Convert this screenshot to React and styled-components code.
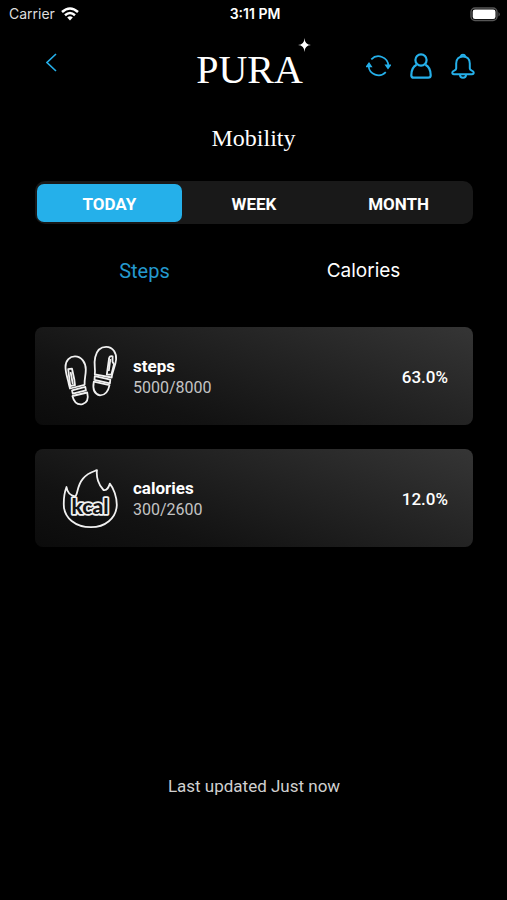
import React, { useState } from "react";
import styled, { createGlobalStyle } from "styled-components";

const BLUE = "#25b0ea";

const GlobalStyle = createGlobalStyle`
  * { box-sizing: border-box; }
  body { margin: 0; background: #000; }
  button { font: inherit; color: inherit; background: none; border: 0; padding: 0; cursor: pointer; }
  svg { display: block; }
`;

const Screen = styled.div`
  min-height: 100vh;
  display: flex;
  flex-direction: column;
  background: #000;
  color: #fff;
  font-family: Roboto, "Liberation Sans", sans-serif;
`;

const StatusBar = styled.div`
  display: grid;
  grid-template-columns: 1fr auto 1fr;
  align-items: center;
  height: 28px;
  padding: 0 6px 0 9px;
  font: 14px/28px Inter, "Liberation Sans", sans-serif;
`;

const Carrier = styled.div`
  display: flex;
  align-items: center;
  gap: 6px;
  color: #ddd;
`;

const Clock = styled.time`
  font-size: 14px;
  font-weight: 600;
`;

const Battery = styled.div`
  justify-self: end;
`;

const Header = styled.header`
  display: grid;
  grid-template-columns: 1fr auto 1fr;
  align-items: center;
  height: 76px;
  padding: 0 32px;
`;

const BackButton = styled.button`
  justify-self: start;
  padding: 4px 14px;
  margin-bottom: 8px;
  color: ${BLUE};
`;

const Logo = styled.div`
  position: relative;
  padding: 8px 8px 0 0;
  font: 40px/48px "Liberation Serif", serif;
`;

const LogoStar = styled.span`
  position: absolute;
  top: 0;
  right: 0;
`;

const Actions = styled.nav`
  display: flex;
  justify-self: end;
  gap: 19px;
  color: ${BLUE};
`;

const Title = styled.h1`
  margin: 17px 0 0;
  text-align: center;
  font: 24px/34px "Liberation Serif", serif;
`;

const Content = styled.main`
  display: flex;
  flex-direction: column;
  flex: 1;
  padding: 26px 34px 0 35px;
`;

const Segments = styled.div`
  display: grid;
  grid-template-columns: repeat(3, 1fr);
  height: 43px;
  padding: 3px 2px 2px;
  border-radius: 10px;
  background: #191919;
`;

const Segment = styled.button`
  && {
    padding-top: 2px;
    border-radius: 7px;
    background: ${(p) => (p.$active ? BLUE : "transparent")};
    font-size: 17px;
    font-weight: 700;
  }
`;

const Tabs = styled.div`
  display: grid;
  grid-template-columns: 1fr 1fr;
  margin-top: 32px;
`;

const Tab = styled.button`
  && {
    font-family: ${(p) => (p.$system ? 'Inter, "Liberation Sans"' : 'Roboto, "Liberation Sans"')}, sans-serif;
    font-size: ${(p) => (p.$system ? "19px" : "20px")};
    line-height: 30px;
    color: ${(p) => (p.$active ? "#2499ce" : "#fff")};
  }
`;

const Cards = styled.div`
  display: flex;
  flex-direction: column;
  gap: 24px;
  margin-top: 41px;
`;

const Card = styled.section`
  display: flex;
  align-items: center;
  height: 98px;
  padding: 0 25px 0 27px;
  border-radius: 8px;
  background: linear-gradient(20deg, #0b0b0b, #121212 25%, #353535);
`;

const CardText = styled.div`
  flex: 1;
  margin-left: 13px;
  padding-top: 2px;
`;

const CardName = styled.h2`
  margin: 0;
  font-size: 17px;
  line-height: 22px;
  font-weight: 700;
`;

const CardValue = styled.p`
  margin: 0;
  font-size: 16px;
  line-height: 22px;
  color: #c4c4c4;
`;

const Percent = styled.div`
  padding-top: 2px;
  font-size: 17px;
  font-weight: 500;
`;

const Updated = styled.footer`
  margin-top: auto;
  padding-bottom: 102px;
  text-align: center;
  font-size: 17px;
  line-height: 24px;
  color: #d0d0d0;
`;

const KcalText = styled.text`
  font: 900 21px Lato, "Liberation Sans", sans-serif;
  stroke-linejoin: round;
`;

const WifiIcon = () => (
  <svg width="18" height="14" viewBox="0 0 18 14" fill="none" stroke="#fff" strokeWidth="2.5">
    <path d="M1 5Q9-2 17 5M4 8.2Q9 3.8 14 8.2" />
    <path d="M6.2 10.4Q9 8 11.8 10.4L9 13.4Z" fill="#fff" stroke="none" />
  </svg>
);

const BatteryIcon = () => (
  <svg width="31" height="15" viewBox="0 0 31 15">
    <rect x="1" y="1" width="26" height="12.5" rx="4" fill="none" stroke="#565656" strokeWidth="1.4" />
    <rect x="2.7" y="2.5" width="22.8" height="9.6" rx="2.3" fill="#fff" />
    <path d="M28.6 5q2 2.3 0 4.6z" fill="#777" />
  </svg>
);

const BackIcon = () => (
  <svg width="11" height="19" viewBox="0 0 11 19" fill="none" stroke="currentColor" strokeWidth="1.6">
    <path d="M10 1 1 9.5 10 18" />
  </svg>
);

const StarIcon = () => (
  <svg width="13" height="14" viewBox="0 0 13 14" fill="#fff">
    <path d="M6.5 0Q6.7 6.7 13 7Q6.7 7.3 6.5 14Q6.3 7.3 0 7Q6.3 6.7 6.5 0Z" />
    <circle cx="6.5" cy="7" r="1.1" />
  </svg>
);

const RefreshIcon = () => (
  <svg width="25" height="26" viewBox="0 0 25 26" fill="none" stroke="currentColor" strokeWidth="1.7">
    <path d="M5.3 6.3A10 10 0 0 1 22.4 12.8M19.8 19.2A10 10 0 0 1 2.6 12.8" />
    <path d="M19.6 12h5L22 15.5ZM.4 13.6h5L3 10.1Z" fill="currentColor" strokeWidth="1.2" />
  </svg>
);

const UserIcon = () => (
  <svg width="22" height="26" viewBox="0 0 22 26" fill="none" stroke="currentColor" strokeWidth="2.2">
    <circle cx="11" cy="7" r="5.6" />
    <path d="M6.6 11.8Q1.4 14.4 1.3 22.2Q1.3 24.7 3.8 24.7H18.2Q20.7 24.7 20.7 22.2Q20.6 14.4 15.4 11.8" />
  </svg>
);

const BellIcon = () => (
  <svg width="24" height="26" viewBox="0 0 24 26" fill="none" stroke="currentColor" strokeWidth="2" strokeLinejoin="round">
    <path d="M5.2 15.5V10.5C5.2 6 8 3.5 12 3.5S18.8 6 18.8 10.5V15.5C18.8 17.8 22.7 17.3 22.7 19.6Q22.7 21.3 21 21.3H3Q1.3 21.3 1.3 19.6C1.3 17.3 5.2 17.8 5.2 15.5Z" />
    <path d="M9.8 3.4a2.3 2.3 0 0 1 4.4 0M9 21.8a3 3 0 0 0 6 0" />
  </svg>
);

const StepsIcon = () => (
  <svg width="58" height="62" viewBox="0 0 58 62" fill="none" stroke="#f1f1f1" strokeWidth="1.8" strokeLinejoin="round">
    <path d="M8 43.5 6.8 39C6.4 35 3.5 29 3.5 22C3.5 15 8 11.4 13 11.4C19.5 11.4 23.8 17.5 23.8 24.5C23.8 30.5 22.3 34 22.6 39.8Z" />
    <path d="M6.2 24.2 10 23.6 12.3 34.5 13 40 8.2 41Z" />
    <path d="M8.6 27 10.8 39M10 45.4 23.3 41.9 23.9 45.3 10.8 48.7Z" />
    <path d="M10.4 51 25.2 47.5Q27.5 57 20.5 59.2Q12.8 60.6 10.4 51Z" />
    <path d="M32.8 29.3C33.7 23 31.5 20 33.2 12.3C34.8 5 39 1.9 44.2 1.9C51 2 54.6 8 54.1 14.5C53.5 21 50 27 49.7 32.5Z" />
    <path d="M47 14Q47.3 10.4 50.6 11.4L50.5 16.8 52 19.3 49.4 29.6H44.8Z" />
    <path d="M48.4 14 46.8 26M32.8 31.2 48.3 34.6 47.9 38.3 32.5 34.8Z" />
    <path d="M31.8 36.6 47.5 40.2Q45.5 50.4 38 50.4Q29.7 48.5 31.8 36.6Z" />
  </svg>
);

const CaloriesIcon = () => (
  <svg width="58" height="62" viewBox="0 0 58 62" fill="none" stroke="#f1f1f1" strokeWidth="1.8" strokeLinejoin="round">
    <path d="M4.5 20C5.2 25 8 28.5 13 29.3C16 28 14.5 19.5 21 11.7C26 5.5 30.5 4.9 35 3.2C34 10 36.5 18 41.5 23C45.5 23.8 46.7 20 47.8 16.6C51.5 21 55 30 54.8 38.5C54 51.5 43 60.2 29 60.2C13.5 60.2 2 51 1.8 38C1.6 29.5 2.6 25 4.5 20Z" />
    <KcalText x="28" y="47" textAnchor="middle" fill="#151515" stroke="#f1f1f1" strokeWidth="3.6" paintOrder="stroke">kcal</KcalText>
  </svg>
);

const periods = ["TODAY", "WEEK", "MONTH"];
const metrics = [
  { name: "steps", value: "5000/8000", percent: "63.0%", Icon: StepsIcon },
  { name: "calories", value: "300/2600", percent: "12.0%", Icon: CaloriesIcon },
];

export default function App() {
  const [period, setPeriod] = useState("TODAY");
  const [tab, setTab] = useState("Steps");
  return (
    <>
      <GlobalStyle />
      <Screen>
        <StatusBar>
          <Carrier>Carrier<WifiIcon /></Carrier>
          <Clock>3:11 PM</Clock>
          <Battery><BatteryIcon /></Battery>
        </StatusBar>
        <Header>
          <BackButton aria-label="Back"><BackIcon /></BackButton>
          <Logo>PURA<LogoStar><StarIcon /></LogoStar></Logo>
          <Actions aria-label="Account">
            <button aria-label="Refresh"><RefreshIcon /></button>
            <button aria-label="Profile"><UserIcon /></button>
            <button aria-label="Notifications"><BellIcon /></button>
          </Actions>
        </Header>
        <Title>Mobility</Title>
        <Content>
          <Segments>
            {periods.map((p) => (
              <Segment key={p} $active={p === period} aria-pressed={p === period} onClick={() => setPeriod(p)}>{p}</Segment>
            ))}
          </Segments>
          <Tabs role="tablist">
            <Tab role="tab" aria-selected={tab === "Steps"} $active={tab === "Steps"} onClick={() => setTab("Steps")}>Steps</Tab>
            <Tab role="tab" aria-selected={tab === "Calories"} $system $active={tab === "Calories"} onClick={() => setTab("Calories")}>Calories</Tab>
          </Tabs>
          <Cards>
            {metrics.map(({ name, value, percent, Icon }) => (
              <Card key={name}>
                <Icon />
                <CardText>
                  <CardName>{name}</CardName>
                  <CardValue>{value}</CardValue>
                </CardText>
                <Percent>{percent}</Percent>
              </Card>
            ))}
          </Cards>
          <Updated>Last updated Just now</Updated>
        </Content>
      </Screen>
    </>
  );
}
